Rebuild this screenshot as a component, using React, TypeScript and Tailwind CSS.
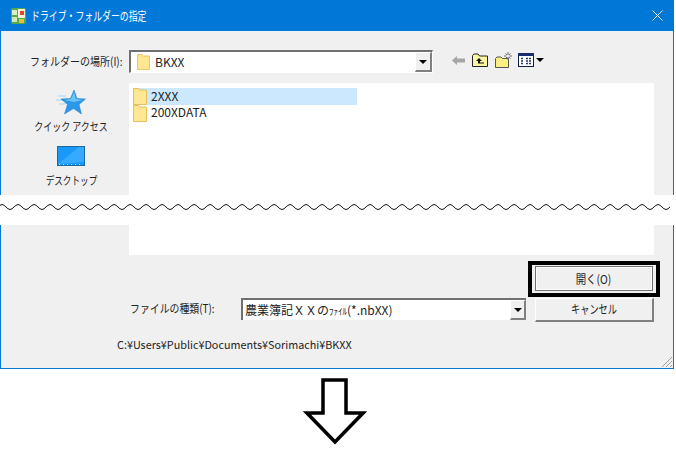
const font = { fontFamily: '"Noto Sans CJK JP", "Noto Sans", sans-serif' }

function Folder({ className = '' }: { className?: string }) {
  return (
    <svg viewBox="0 0 14 17" className={className}>
      <path d="M0.5 0.5 H5.5 L7 2 H13.5 V16.5 H0.5 Z" fill="#fde58c" stroke="#e6c060" />
      <path d="M1.5 3.5 H12.5 V15.5 H1.5 Z" fill="#ffe793" />
    </svg>
  )
}

function DropArrow({ className = '' }: { className?: string }) {
  return (
    <div className={`flex items-center justify-center border-t border-l border-white border-r-2 border-b-2 border-r-[#808080] border-b-[#808080] bg-[#f0f0f0] ${className}`}>
      <span className="h-0 w-0 border-x-[4px] border-t-[4px] border-x-transparent border-t-black" />
    </div>
  )
}

function Wave() {
  const segs = Array.from({ length: 43 }, (_, i) => {
    const x = i * 16 - 14
    return `M${x} 4.5 C${x + 3} 4.5 ${x + 5} 9.5 ${x + 8} 9.5 C${x + 11} 9.5 ${x + 13} 4.5 ${x + 16} 4.5`
  }).join(' ')
  return (
    <svg width="670" height="14" viewBox="0 0 670 14" className="block">
      <path d={segs} fill="none" stroke="#111" strokeWidth="1" />
    </svg>
  )
}

function ToolIcons() {
  return (
    <div className="flex items-center">
      {/* back */}
      <svg width="13" height="9" viewBox="0 0 13 9" className="ml-[19px]">
        <path d="M0 4.5 L5 0 V2.5 H13 V6.5 H5 V9 Z" fill="#a6a6a6" />
      </svg>
      {/* up */}
      <svg width="16" height="14" viewBox="0 0 16 14" className="ml-[7px]">
        <path d="M0.5 13.5 V2.5 L2 1 H6 L7.5 3 H15.5 V13.5 Z" fill="#fbf7a0" stroke="#222" />
        <path d="M7 5 L4 8 H6 V10.5 H12 V9.5 H8 V8 H10 Z" fill="#111" />
      </svg>
      {/* new folder */}
      <svg width="17" height="16" viewBox="0 0 17 16" className="ml-[7px]">
        <path d="M0.5 15.5 V6.5 L2 5 H6 L7.5 6.5 H13.5 V15.5 Z" fill="#fbf080" stroke="#555" />
        <path d="M13 0 V3 M13 5 V8 M9 4 H11.5 M14.5 4 H17 M10.5 1.5 L12 3 M15.5 1.5 L14 3 M10.5 6.5 L12 5 M15.5 6.5 L14 5" stroke="#666" strokeWidth="1" />
      </svg>
      {/* views */}
      <svg width="16" height="14" viewBox="0 0 16 14" className="ml-[6px]">
        <rect x="0.5" y="0.5" width="15" height="13" fill="#fff" stroke="#0f1c50" />
        <rect x="0" y="0" width="16" height="3" fill="#1b2c6e" />
        <path d="M3 5.5 H6 M8 5.5 H13 M3 8 H6 M8 8 H13 M3 10.5 H6 M8 10.5 H13" stroke="#28386e" strokeWidth="1.4" strokeDasharray="2 1" />
      </svg>
      <span className="ml-[2px] h-0 w-0 border-x-[4px] border-t-[4px] border-x-transparent border-t-black" />
    </div>
  )
}

export default function App() {
  return (
    <div className="h-[461px] w-[676px] overflow-hidden bg-white text-[12px] leading-none text-[#222]" style={font}>
      {/* title bar */}
      <div className="flex h-[31px] w-[674px] items-center bg-[#0078d7] pl-[11px] pr-[10px] text-white">
        <svg width="15" height="16" viewBox="0 0 15 16">
          <rect width="15" height="16" rx="2" fill="#5aa84a" />
          <rect x="7" y="1" width="7" height="9" fill="#f5f0d8" />
          <rect x="9" y="3" width="4" height="4" fill="#e0452e" />
          <rect x="1" y="2" width="5" height="5" fill="#d8ecc8" />
          <rect x="1" y="9" width="5" height="5" fill="#cfe8b8" />
          <rect x="8" y="11" width="5" height="4" fill="#e2c040" />
        </svg>
        <span className="ml-[5px] origin-left scale-x-[0.74] whitespace-nowrap text-[12px]">ドライブ・フォルダーの指定</span>
        <svg width="11" height="11" viewBox="0 0 11 11" className="ml-auto mr-[1px]">
          <path d="M0.5 0.5 L10.5 10.5 M10.5 0.5 L0.5 10.5" stroke="#fff" strokeWidth="1" />
        </svg>
      </div>

      {/* upper half */}
      <div className="h-[164px] w-[674px] border-x border-x-[#0078d7] bg-[#f0f0f0]">
        <div className="flex h-[52px] items-start pt-[19px]">
          <span className="ml-[29px] w-[99px] origin-left scale-x-[0.87] whitespace-nowrap pt-[6px] text-[11.5px]">フォルダーの場所(I):</span>
          <div className="flex h-[23px] w-[304px] items-center border-t-2 border-l-2 border-t-[#707070] border-l-[#707070] border-b border-r border-b-white border-r-white bg-white">
            <Folder className="ml-[6px] h-[16px] w-[13px]" />
            <span className="ml-[5px] text-[12px]">BKXX</span>
            <DropArrow className="ml-auto h-full w-[17px]" />
          </div>
          <div className="pt-[2px]">
            <ToolIcons />
          </div>
        </div>
        <div className="flex">
          <div className="flex w-[128px] flex-col items-center pl-[12px] pt-[7px]">
            <svg width="30" height="25" viewBox="0 0 30 25">
              <path d="M2 6 H10 M0 10 H8 M3 14 H9" stroke="#a8d4f0" strokeWidth="1" />
              <path d="M18 0 L21 8.5 L29.5 9 L23 14.5 L25.5 24 L17.5 18.5 L8.5 24 L11.5 14.5 L5 9 L14.5 8.5 Z" fill="#2a98e8" stroke="#1a78c8" strokeWidth="0.5" />
              <path d="M18 2 L20 9 L27 10 L18 12 L8 10 L15 9 Z" fill="#6cc4f6" />
            </svg>
            <span className="mt-[6px] scale-x-[0.78] whitespace-nowrap text-[11.5px]">クイック アクセス</span>
            <svg width="28" height="20" viewBox="0 0 28 20" className="mt-[13px]">
              <rect x="0.5" y="0.5" width="27" height="19" fill="#1a98f8" stroke="#1a6aa8" />
              <path d="M1 18 L22 1 H27 V16 Z" fill="#36aaff" />
              <path d="M2 18.5 H26" stroke="#cfe8ff" strokeDasharray="1 3" />
            </svg>
            <span className="mt-[9px] scale-x-[0.75] whitespace-nowrap text-[11.5px]">デスクトップ</span>
          </div>
          <div className="h-[112px] w-[525px] bg-white pl-[4px] pt-[5px] text-[12px]">
            <div className="flex h-[17px] w-[224px] items-center bg-[#cce8ff]">
              <Folder className="h-[17px] w-[14px]" />
              <span className="ml-[4px] pb-[2px]">2XXX</span>
            </div>
            <div className="flex h-[17px] items-center">
              <Folder className="h-[17px] w-[14px]" />
              <span className="ml-[4px] pb-[4px]">200XDATA</span>
            </div>
          </div>
        </div>
      </div>

      {/* cut mark */}
      <div className="flex h-[30px] items-start pt-[5px]">
        <Wave />
      </div>

      {/* lower half */}
      <div className="relative h-[144px] w-[674px] border-x border-b border-[#0078d7] bg-[#f0f0f0]">
        <div className="ml-[128px] h-[30px] w-[525px] bg-white" />
        <div className="ml-[534px] mt-[11px] flex h-[25px] w-[118px] items-center justify-center border border-[#707070] bg-[#f0f0f0] outline outline-1 -outline-offset-2 outline-white">
          <span className="scale-x-[0.87]">開く(O)</span>
        </div>
        <div className="mt-[7px] flex h-[25px] items-start">
          <span className="ml-[129px] w-[111px] origin-left scale-x-[0.86] whitespace-nowrap pt-[5px] text-[11.5px]">ファイルの種類(T):</span>
          <div className="flex h-[22px] w-[285px] items-center border-t-2 border-l-2 border-t-[#707070] border-l-[#707070] bg-white pl-[2px]">
            <span>農業簿記ＸＸの<span className="text-[9px]">ﾌｧｲﾙ</span>(*.nbXX)</span>
            <DropArrow className="ml-auto h-full w-[16px]" />
          </div>
          <div className="ml-[9px] flex h-[24px] w-[119px] items-center justify-center border-t border-l border-white border-r-2 border-b-2 border-r-[#808080] border-b-[#808080] bg-[#f0f0f0] pb-[2px]">
            <span className="scale-x-[0.77]">キャンセル</span>
          </div>
        </div>
        <div className="ml-[116px] mt-[16px] text-[10.8px]">C:¥Users¥Public¥Documents¥Sorimachi¥BKXX</div>

        {/* highlight over the open button */}
        <div className="absolute left-[527px] top-[36px] h-[36px] w-[132px] border-[4px] border-black" />
        {/* resize grip */}
        <svg width="12" height="12" viewBox="0 0 12 12" className="absolute bottom-0 right-0">
          <path d="M11 1 L1 11 M11 5 L5 11 M11 9 L9 11" stroke="#a0a0a0" strokeWidth="1" />
        </svg>
      </div>

      {/* arrow */}
      <div className="flex justify-center pr-[6px] pt-[9px]">
        <svg width="64" height="68" viewBox="0 0 64 68">
          <path d="M20 2 H43 V35 H60 L32 64 L4 35 H20 Z" fill="#fff" stroke="#000" strokeWidth="3.5" />
        </svg>
      </div>
    </div>
  )
}
